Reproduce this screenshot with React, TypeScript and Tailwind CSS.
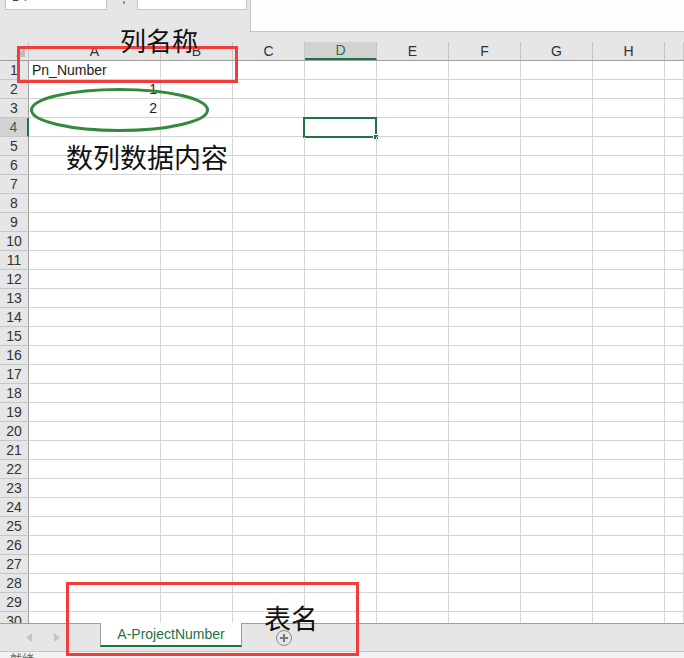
import React from "react";

const COLS = ["A", "B", "C", "D", "E", "F", "G", "H", ""];
const ROWS = Array.from({ length: 30 }, (_, i) => i + 1);

function colW(i: number) {
  if (i === 0) return "w-[132px] shrink-0";
  if (i === 8) return "flex-1";
  return "w-[72px] shrink-0";
}

export default function App() {
  return (
    <div
      className="relative w-[684px] h-[658px] overflow-hidden bg-white flex flex-col text-[#222]"
      style={{ fontFamily: '"Liberation Sans", "Noto Sans CJK SC", sans-serif' }}
    >
      {/* top (formula bar area) */}
      <div className="h-[32px] shrink-0 flex bg-[#e6e6e6]">
        <div className="w-[250px] shrink-0 relative flex items-start">
          <div className="ml-[5px] w-[102px] h-[10px] bg-white border border-t-0 border-[#c6c6c6] overflow-hidden relative">
            <span className="absolute left-[6px] -top-[12px] text-[12px] text-[#444]">D4</span>
          </div>
          <div className="ml-[16px] w-[2px] h-[3px] bg-[#9a9a9a] mt-[1px]" />
          <div className="ml-[12px] w-[110px] h-[10px] bg-white border border-t-0 border-[#c6c6c6]" />
        </div>
        <div className="flex-1 bg-[#fdfdfd] border-l border-b border-[#c6c6c6]" />
      </div>
      <div className="h-[10px] shrink-0 bg-[#e6e6e6]" />

      {/* column header */}
      <div className="h-[19px] shrink-0 flex bg-[#e6e6e6] border-b border-[#9f9f9f]">
        <div className="w-[29px] shrink-0 border-r border-[#c6c6c6] relative">
          <svg className="absolute left-[15px] top-[5px]" width="10" height="10" viewBox="0 0 10 10">
            <polygon points="10,0 10,10 0,10" fill="#bdbdbd" />
          </svg>
        </div>
        {COLS.map((c, i) => (
          <div
            key={i}
            className={`${colW(i)} flex items-center justify-center text-[14px] leading-none border-r border-[#c6c6c6] ${
              c === "D" ? "bg-[#d2d2d2] border-b-2 border-b-[#217346] text-[#217346]" : "text-[#333]"
            }`}
          >
            {c}
          </div>
        ))}
      </div>

      {/* grid */}
      <div className="flex-1 overflow-hidden">
        {ROWS.map((r) => (
          <div key={r} className="h-[19px] flex">
            <div
              className={`w-[29px] shrink-0 flex items-center justify-center text-[14px] leading-none border-b border-[#c6c6c6] ${
                r === 4
                  ? "bg-[#d2d2d2] border-r-2 border-r-[#217346] text-[#217346]"
                  : "bg-[#e6e6e6] border-r border-r-[#9f9f9f] text-[#333]"
              }`}
            >
              {r}
            </div>
            {COLS.map((c, i) => (
              <div
                key={i}
                className={`${colW(i)} relative border-r border-b border-[#d4d4d4] flex items-center text-[14px] leading-none`}
              >
                {r === 1 && i === 0 && <span className="pl-[3px]">Pn_Number</span>}
                {r === 2 && i === 0 && <span className="ml-auto pr-[3px]">1</span>}
                {r === 3 && i === 0 && <span className="ml-auto pr-[3px]">2</span>}
                {r === 4 && c === "D" && (
                  <div className="absolute -left-[2px] -top-[1px] w-[74px] h-[21px] border-2 border-[#217346]">
                    <div className="absolute -right-[4px] -bottom-[4px] w-[6px] h-[6px] bg-[#217346] border border-white" />
                  </div>
                )}
              </div>
            ))}
          </div>
        ))}
      </div>

      {/* sheet tabs */}
      <div className="h-[28px] shrink-0 flex items-start bg-[#e6e6e6] border-t border-[#9f9f9f]">
        <div className="w-[100px] shrink-0 h-full flex items-center">
          <svg className="ml-[26px]" width="6" height="9" viewBox="0 0 6 9">
            <polygon points="6,0 6,9 0,4.5" fill="#c4c4c4" />
          </svg>
          <svg className="ml-[22px]" width="6" height="9" viewBox="0 0 6 9">
            <polygon points="0,0 0,9 6,4.5" fill="#c4c4c4" />
          </svg>
        </div>
        <div className="-mt-px w-[142px] h-[24px] bg-white border-x border-[#9f9f9f] border-b-2 border-b-[#217346] flex items-center justify-center text-[14px] text-[#217346]">
          A-ProjectNumber
        </div>
        <div className="ml-[34px] mt-[6px] w-[16px] h-[16px] rounded-full border border-[#8a8a8a] flex items-center justify-center">
          <svg width="10" height="10" viewBox="0 0 10 10">
            <path d="M5 1v8M1 5h8" stroke="#777" strokeWidth="2" />
          </svg>
        </div>
      </div>
      <div className="h-[7px] shrink-0 bg-[#f2f2f2] border-t border-[#c6c6c6] overflow-hidden relative">
        <span
          className="absolute left-[10px] top-[1px] text-[12px] leading-none text-[#666]"
          style={{ fontFamily: '"Noto Sans CJK SC", sans-serif' }}
        >
          就绪
        </span>
      </div>

      {/* annotations */}
      <div className="absolute left-[17px] top-[46px] w-[221px] h-[37px] border-[3px] border-[#f23b3b]" />
      <div className="absolute left-[66px] top-[582px] w-[293px] h-[74px] border-[3px] border-[#f23b3b]" />
      <svg className="absolute left-[28px] top-[86px]" width="184" height="48" viewBox="0 0 184 48">
        <ellipse cx="91.5" cy="24" rx="88" ry="20.5" fill="none" stroke="#338a3a" strokeWidth="3" />
      </svg>
      <div
        className="absolute left-[120px] top-[27px] text-[26px] leading-none text-[#111]"
        style={{ fontFamily: '"Noto Sans CJK SC", sans-serif' }}
      >
        列名称
      </div>
      <div
        className="absolute left-[66px] top-[143px] text-[27px] leading-none text-[#111]"
        style={{ fontFamily: '"Noto Sans CJK SC", sans-serif' }}
      >
        数列数据内容
      </div>
      <div
        className="absolute left-[264px] top-[604px] text-[27px] leading-none text-[#111]"
        style={{ fontFamily: '"Noto Sans CJK SC", sans-serif' }}
      >
        表名
      </div>
    </div>
  );
}
